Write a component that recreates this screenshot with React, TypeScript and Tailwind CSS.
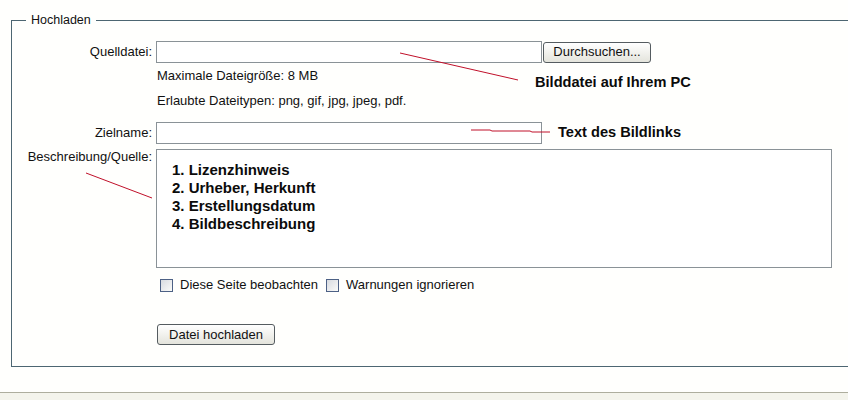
import React from "react";

function Checkbox() {
  return (
    <span className="inline-block w-[13px] h-[13px] border border-[#4d6185] bg-gradient-to-br from-[#d8dbe0] to-[#fbfbf9] shrink-0" />
  );
}

export default function App() {
  return (
    <div className="relative w-[848px] h-[400px] overflow-hidden bg-[#fffffd] text-[13px] leading-[14px] text-[#111] font-['Liberation_Sans',Arial,sans-serif] flex flex-col">
      <div className="pt-[13px] pl-[11px]">
        <fieldset className="border border-[#4d6672] w-[870px] p-0 m-0">
          <legend className="ml-[14px] px-[5px] text-[12.5px] leading-[14px] text-[#111]">Hochladen</legend>
          <div className="pt-[14px] pb-[21px] flex flex-col">
            <div className="flex items-center h-[22px]">
              <label className="w-[140px] text-right">Quelldatei:</label>
              <div className="ml-[4px] w-[386px] h-[22px] border border-[#8a9297] bg-white" />
              <button className="ml-[1px] w-[108px] h-[21px] rounded-[3px] border border-[#555c60] bg-gradient-to-b from-white to-[#e4e4dc] text-[13px] text-[#111] leading-[14px]">
                Durchsuchen...
              </button>
            </div>
            <div className="mt-[6px] pl-[145px]">Maximale Dateigröße: 8 MB</div>
            <div className="mt-[11px] pl-[145px]">Erlaubte Dateitypen: png, gif, jpg, jpeg, pdf.</div>
            <div className="mt-[14px] flex items-center h-[22px]">
              <label className="w-[140px] text-right">Zielname:</label>
              <div className="ml-[4px] w-[386px] h-[22px] border border-[#8a9297] bg-white" />
            </div>
            <div className="mt-[5px] flex items-start">
              <label className="w-[140px] text-right pt-[1px]">Beschreibung/Quelle:</label>
              <div className="relative ml-[4px] w-[676px] h-[119px] border border-[#8a9297] bg-white pt-[11px] pl-[15px] text-[15px] leading-[18px] font-bold text-[#0b0b0b]">
                <div>1. Lizenzhinweis</div>
                <div>2. Urheber, Herkunft</div>
                <div>3. Erstellungsdatum</div>
                <div>4. Bildbeschreibung</div>
              </div>
            </div>
            <div className="mt-[10px] pl-[148px] flex items-center h-[14px]">
              <Checkbox />
              <span className="ml-[7px]">Diese Seite beobachten</span>
              <span className="ml-[8px] flex items-center">
                <Checkbox />
              </span>
              <span className="ml-[7px]">Warnungen ignorieren</span>
            </div>
            <div className="mt-[32px] pl-[145px]">
              <button className="w-[118px] h-[21px] rounded-[3px] border border-[#555c60] bg-gradient-to-b from-white to-[#e4e4dc] text-[13px] text-[#111] leading-[14px]">
                Datei hochladen
              </button>
            </div>
          </div>
        </fieldset>
      </div>
      <div className="mt-[25px] flex-1 border-t border-[#aeae9e] bg-[#f4f4ec]" />

      <svg className="absolute inset-0 pointer-events-none" width="848" height="400">
        <line x1="400" y1="53" x2="518" y2="80" stroke="#c0102a" strokeWidth="1" />
        <polyline points="471,130 490,130 492,131 530,131 532,132 550,132" fill="none" stroke="#c0102a" strokeWidth="1" />
        <line x1="86" y1="173" x2="152" y2="198" stroke="#c0102a" strokeWidth="1" />
      </svg>
      <div className="absolute left-[535px] top-[74px] text-[14.6px] leading-[16px] font-bold text-[#0b0b0b]">Bilddatei auf Ihrem PC</div>
      <div className="absolute left-[558px] top-[124px] text-[14.6px] leading-[16px] font-bold text-[#0b0b0b]">Text des Bildlinks</div>
    </div>
  );
}
